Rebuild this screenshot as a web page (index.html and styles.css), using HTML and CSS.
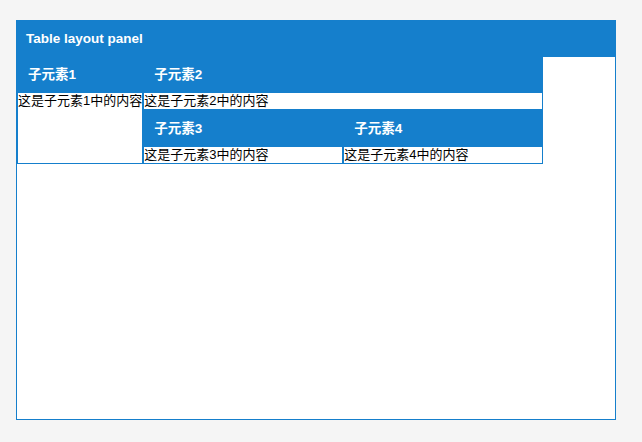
FILE: index.html
```html
<!DOCTYPE html>
<html>
<head>
<meta charset="utf-8">
<link rel="stylesheet" href="styles.css">
</head>
<body>
<div class="panel">
  <div class="panel-header">Table layout panel</div>
  <div class="panel-body">
    <div class="table">
      <div class="child c1">
        <div class="child-header">子元素1</div>
        <div class="child-body">这是子元素1中的内容</div>
      </div>
      <div class="child c2">
        <div class="child-header">子元素2</div>
        <div class="child-body">这是子元素2中的内容</div>
      </div>
      <div class="child row2">
        <div class="child-header">子元素3</div>
        <div class="child-body">这是子元素3中的内容</div>
      </div>
      <div class="child row2">
        <div class="child-header">子元素4</div>
        <div class="child-body">这是子元素4中的内容</div>
      </div>
    </div>
  </div>
</div>
</body>
</html>
```

FILE: styles.css
```css
html, body {
  margin: 0;
  padding: 0;
  background: #f5f5f5;
}
body {
  padding: 20px 0 0 16px;
  font-family: "Liberation Sans", Arial, "Noto Sans CJK SC", sans-serif;
}
.panel {
  width: 598px;
  height: 398px;
  border: 1px solid #157fcc;
  background: #ffffff;
  display: flex;
  flex-direction: column;
}
.panel-header {
  height: 36px;
  flex: 0 0 36px;
  background: #157fcc;
  color: #ffffff;
  font-weight: bold;
  font-size: 13.5px;
  line-height: 36px;
  padding-left: 10px;
  margin-top: -1px;
  margin-left: -1px;
  margin-right: -1px;
  padding-top: 1px;
}
.panel-body {
  flex: 1;
}
.table {
  display: inline-grid;
  grid-template-columns: auto 200px 200px;
  align-items: stretch;
}
.child {
  display: flex;
  flex-direction: column;
}
.c1 {
  grid-row: span 2;
}
.c2 {
  grid-column: span 2;
}
.child-header {
  height: 36px;
  flex: 0 0 36px;
  background: #157fcc;
  color: #ffffff;
  font-weight: bold;
  font-size: 13.5px;
  line-height: 36px;
  padding-left: 11px;
}
.row2 .child-header {
  height: 37px;
  flex-basis: 37px;
  line-height: 38px;
}
.child-body {
  flex: 1;
  border: 1px solid #157fcc;
  border-top: 0;
  font-size: 13px;
  line-height: 16px;
  color: #000000;
  white-space: nowrap;
  font-family: "Liberation Sans", Arial, "Noto Sans CJK SC", sans-serif;
}
```
